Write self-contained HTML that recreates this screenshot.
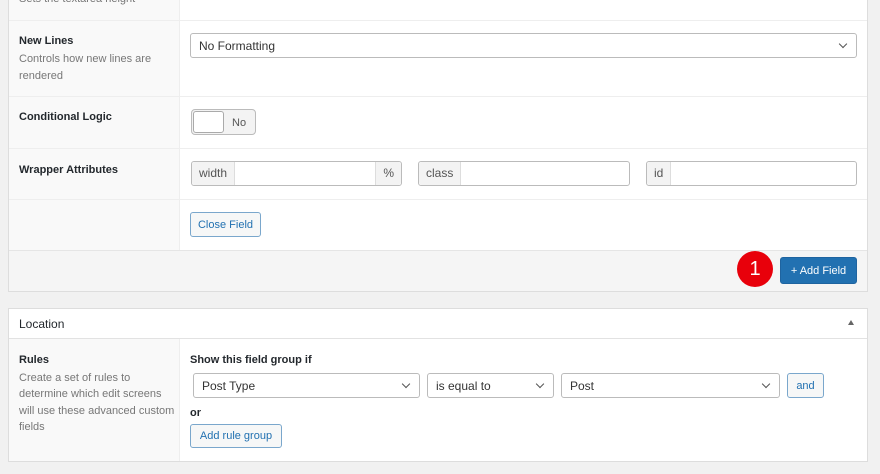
<!DOCTYPE html>
<html><head><style>
*{box-sizing:border-box;margin:0;padding:0}
body{width:880px;height:474px;background:#f1f1f1;font-family:"Liberation Sans",sans-serif;font-size:12px;color:#444;position:relative;overflow:hidden}
.a{position:absolute}
.lbl{font-weight:bold;color:#23282d;font-size:11px}
.desc{color:#777;font-size:11px;line-height:17px}
.sel{position:absolute;background:#fff;border:1px solid #bbb;border-radius:3px;font-size:12px;color:#333;padding-left:8px;display:flex;align-items:center}
.sel:after{content:"";position:absolute;right:10px;top:7px;width:5px;height:5px;border-right:1.5px solid #555;border-bottom:1.5px solid #555;transform:rotate(45deg)}
.inp{position:absolute;background:#fff;border:1px solid #bbb;border-radius:3px;height:25px}
.add{position:absolute;top:0;height:23px;background:#f3f3f3;color:#555;font-size:12px;line-height:23px;padding:0 7px}
.btn{position:absolute;border:1px solid #7aa7cc;border-radius:3px;background:#f6f7f7;color:#2271b1;font-size:11px;display:flex;align-items:center;justify-content:center}
.hl{position:absolute;left:9px;width:858px;height:1px;background:#eee}
</style></head><body>
<div class="a" style="left:8px;top:-2px;width:860px;height:294px;background:#fff;border:1px solid #ddd"></div>
<div class="a" style="left:9px;top:0;width:171px;height:250px;background:#f9f9f9;border-right:1px solid #eee"></div>
<div class="a desc" style="left:19px;top:-9px">Sets the textarea height</div>
<div class="hl" style="top:20px"></div>
<div class="hl" style="top:96px"></div>
<div class="hl" style="top:148px"></div>
<div class="hl" style="top:199px"></div>
<div class="a" style="left:9px;top:250px;width:858px;height:41px;background:#f5f5f5;border-top:1px solid #e5e5e5"></div>

<div class="a lbl" style="left:19px;top:35px">New Lines</div>
<div class="a desc" style="left:19px;top:51px">Controls how new lines are<br>rendered</div>
<div class="sel" style="left:190px;top:33px;width:667px;height:25px">No Formatting</div>

<div class="a lbl" style="left:19px;top:111px">Conditional Logic</div>
<div class="a" style="left:191px;top:109px;width:65px;height:26px;border:1px solid #bbb;border-radius:4px;background:#f3f3f3"></div>
<div class="a" style="left:193px;top:111px;width:31px;height:22px;border:1px solid #aaa;border-radius:3px;background:#fff"></div>
<div class="a" style="left:232px;top:117px;font-size:11px;color:#555">No</div>

<div class="a lbl" style="left:19px;top:164px">Wrapper Attributes</div>
<div class="inp" style="left:191px;top:161px;width:211px"><div class="add" style="left:0;border-right:1px solid #ddd;border-radius:3px 0 0 3px">width</div><div class="add" style="right:0;border-left:1px solid #ddd;border-radius:0 3px 3px 0">%</div></div>
<div class="inp" style="left:418px;top:161px;width:212px"><div class="add" style="left:0;border-right:1px solid #ddd;border-radius:3px 0 0 3px">class</div></div>
<div class="inp" style="left:646px;top:161px;width:211px"><div class="add" style="left:0;border-right:1px solid #ddd;border-radius:3px 0 0 3px">id</div></div>

<div class="btn" style="left:190px;top:212px;width:71px;height:25px">Close Field</div>

<div class="a" style="left:737px;top:251px;width:36px;height:36px;border-radius:50%;background:#e8000b;color:#fff;font-size:20px;text-align:center;line-height:36px">1</div>
<div class="a" style="left:780px;top:257px;width:77px;height:27px;background:#2271b1;border:1px solid #1f64a0;border-radius:3px;color:#fff;font-size:11px;display:flex;align-items:center;justify-content:center">+ Add Field</div>

<div class="a" style="left:8px;top:308px;width:860px;height:154px;background:#fff;border:1px solid #ddd"></div>
<div class="a" style="left:9px;top:338px;width:858px;height:1px;background:#e2e2e2"></div>
<div class="a" style="left:19px;top:317px;font-size:12px;color:#23282d">Location</div>
<div class="a" style="left:848px;top:320px;width:0;height:0;border-left:3px solid transparent;border-right:3px solid transparent;border-bottom:5px solid #666"></div>
<div class="a" style="left:9px;top:339px;width:171px;height:122px;background:#f9f9f9;border-right:1px solid #eee"></div>
<div class="a lbl" style="left:19px;top:354px">Rules</div>
<div class="a desc" style="left:19px;top:370px;line-height:16.3px">Create a set of rules to<br>determine which edit screens<br>will use these advanced custom<br>fields</div>
<div class="a lbl" style="left:190px;top:354px">Show this field group if</div>
<div class="sel" style="left:193px;top:373px;width:227px;height:25px">Post Type</div>
<div class="sel" style="left:427px;top:373px;width:127px;height:25px">is equal to</div>
<div class="sel" style="left:561px;top:373px;width:219px;height:25px">Post</div>
<div class="btn" style="left:787px;top:373px;width:37px;height:25px">and</div>
<div class="a lbl" style="left:190px;top:407px">or</div>
<div class="btn" style="left:190px;top:424px;width:92px;height:24px">Add rule group</div>
</body></html>
